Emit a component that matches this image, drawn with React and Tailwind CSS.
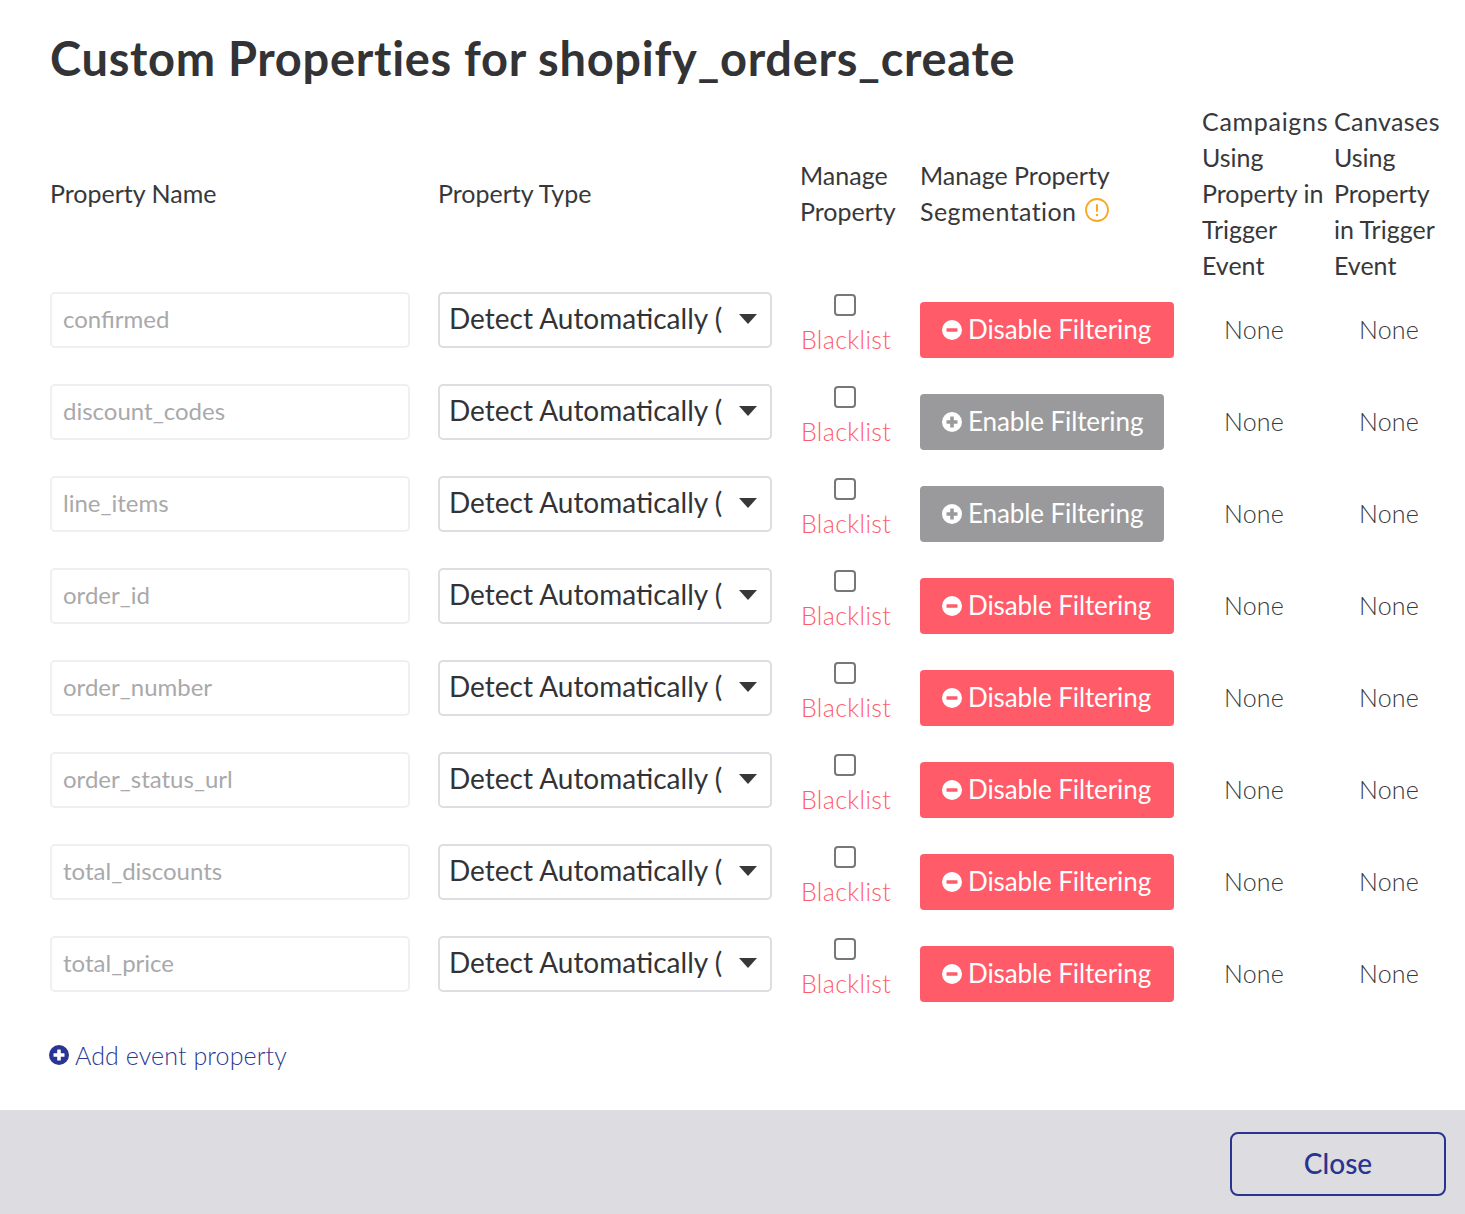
const rows = [
    { name: "confirmed", filtering: true },
    { name: "discount_codes", filtering: false },
    { name: "line_items", filtering: false },
    { name: "order_id", filtering: true },
    { name: "order_number", filtering: true },
    { name: "order_status_url", filtering: true },
    { name: "total_discounts", filtering: true },
    { name: "total_price", filtering: true },
];

const gridCols = "grid grid-cols-[388px_362px_120px_282px_132px_131px]";

function CircleIcon({ minus, fill, cross, className }) {
    return (
        <svg viewBox="0 0 20 20" className={className}>
            <circle cx="10" cy="10" r="10" fill={fill} />
            <rect x="4.5" y="8.2" width="11" height="3.6" rx="0.6" fill={cross} />
            {!minus && <rect x="8.2" y="4.5" width="3.6" height="11" rx="0.6" fill={cross} />}
        </svg>
    );
}

function Row({ row }) {
    return (
        <div className={`${gridCols} h-[92px] items-start`}>
            <div className="pt-2">
                <div className="w-[360px] h-14 flex items-center px-[11px] pb-[2px] border-2 border-[#f0f0f2] rounded-[5px] text-[24px] text-[#a9a9ab]">
                    {row.name}
                </div>
            </div>
            <div className="pt-2">
                <div className="relative w-[334px] h-14 flex items-center pl-[9px] pb-[5px] border-2 border-[#dddde2] rounded-[5px] text-[28px] text-[#333336]">
                    <span className="whitespace-nowrap">Detect Automatically (</span>
                    <svg viewBox="0 0 18 10" className="absolute right-[13px] top-[20px] w-[18px] h-[10px]">
                        <path d="M0 0H18L9 10Z" fill="#38383b" />
                    </svg>
                </div>
            </div>
            <div className="flex flex-col items-start pt-[10px]">
                <span className="ml-[34px] w-[22px] h-[22px] border-2 border-[#77777a] rounded-[4px]" />
                <span className="mt-[8px] ml-[1px] text-[25px] leading-[30px] tracking-[0.35px] font-light text-[#ff5c69]">Blacklist</span>
            </div>
            <div className="pt-[18px]">
                {row.filtering ? (
                    <button className="w-[254px] h-14 flex items-center pl-[22px] pb-[1px] gap-[6px] rounded-[4px] bg-[#ff5b69] text-white text-[26px] tracking-[-0.1px]">
                        <CircleIcon minus fill="#ffffff" cross="#ff5b69" className="w-5 h-5" />
                        Disable Filtering
                    </button>
                ) : (
                    <button className="w-[244px] h-14 flex items-center pl-[22px] pb-[1px] gap-[6px] rounded-[4px] bg-[#9a9a9c] text-white text-[26px] tracking-[-0.1px]">
                        <CircleIcon fill="#ffffff" cross="#9a9a9c" className="w-5 h-5" />
                        Enable Filtering
                    </button>
                )}
            </div>
            <div className="pt-[18px] pl-[22px] h-[74px] flex items-center text-[25px] tracking-[0.2px] font-light text-[#38383b]">None</div>
            <div className="pt-[18px] pl-[25px] h-[74px] flex items-center text-[25px] tracking-[0.2px] font-light text-[#38383b]">None</div>
        </div>
    );
}

export default function App() {
    return (
        <div className="w-[1465px] h-[1214px] bg-white flex flex-col overflow-hidden font-['Lato','Liberation_Sans',sans-serif]">
            <div className="flex-1 pl-[50px]">
                <h1 className="pt-[30px] h-[103px] text-[47px] leading-[56px] tracking-[0.7px] font-bold text-[#333336] whitespace-nowrap">
                    Custom Properties for shopify_orders_create
                </h1>
                <div className={`${gridCols} items-center h-[180px] mb-[1px] text-[25px] leading-[36px] text-[#38383b]`}>
                    <div>Property Name</div>
                    <div>Property Type</div>
                    <div>Manage<br />Property</div>
                    <div>
                        Manage Property<br />
                        <span className="inline-flex items-center gap-[9px]">
                            <span className="tracking-[0.4px]">Segmentation</span>
                            <svg viewBox="0 0 24 24" className="w-6 h-6 -mt-[2px]">
                                <circle cx="12" cy="12" r="11" fill="none" stroke="#f9a825" strokeWidth="1.8" />
                                <rect x="11" y="6" width="2" height="8" rx="1" fill="#f9a825" />
                                <circle cx="12" cy="17" r="1.2" fill="#f9a825" />
                            </svg>
                        </span>
                    </div>
                    <div>
                        <span className="tracking-[0.7px]">Campaigns</span> Using Property in Trigger Event
                    </div>
                    <div className="w-[110px]">
                        <span className="tracking-[0.4px]">Canvases</span> Using Property in Trigger Event
                    </div>
                </div>
                {rows.map((row) => (
                    <Row key={row.name} row={row} />
                ))}
                <div className="mt-[17px] -ml-[1px] flex items-center gap-[6px] text-[25px] leading-[36px] tracking-[0.1px] font-light text-[#2b3a94]">
                    <CircleIcon fill="#2a3593" cross="#ffffff" className="w-5 h-5" />
                    Add event property
                </div>
            </div>
            <div className="h-[104px] bg-[#dddde1] flex items-center justify-end pr-[19px]">
                <button className="mt-1 pb-[3px] w-[216px] h-16 border-2 border-[#28348f] rounded-[8px] text-[28px] font-medium text-[#28348f]">
                    Close
                </button>
            </div>
        </div>
    );
}
